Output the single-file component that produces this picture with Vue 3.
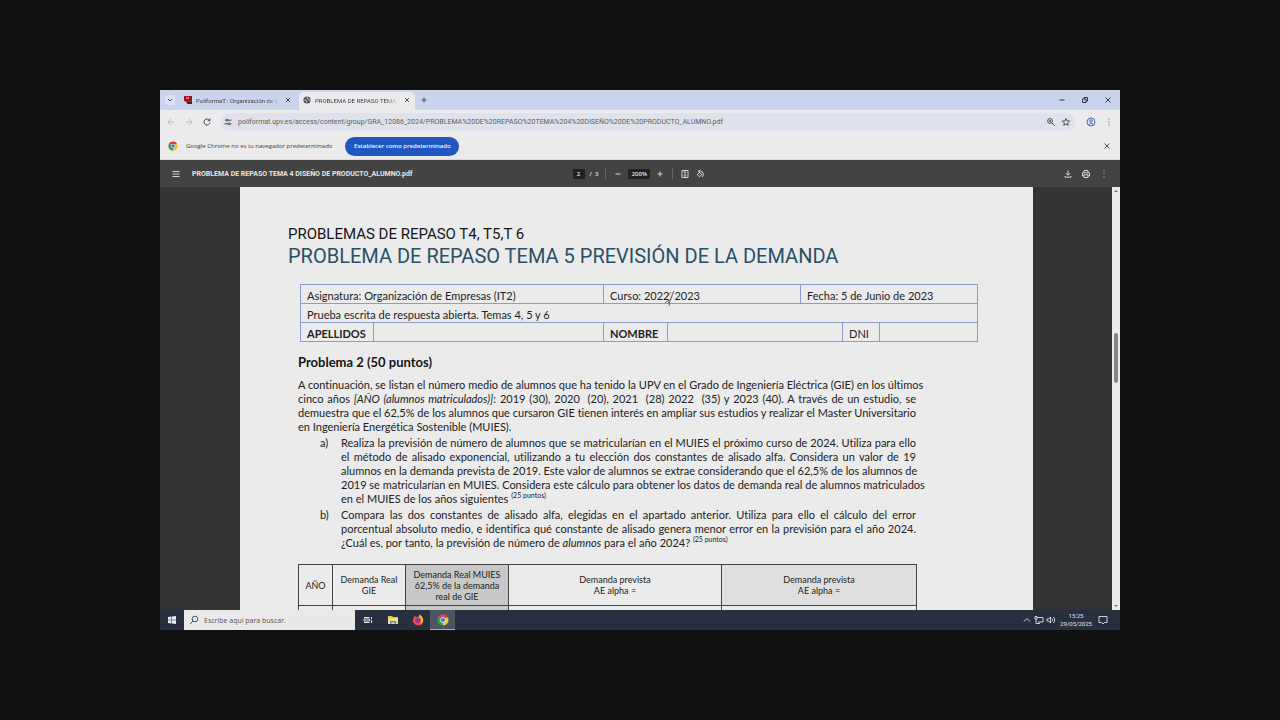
<script setup>
import { ref } from 'vue';

const url = ref('poliformat.upv.es/access/content/group/GRA_12086_2024/PROBLEMA%20DE%20REPASO%20TEMA%204%20DISEÑO%20DE%20PRODUCTO_ALUMNO.pdf');
const pageNumber = ref('2');
const zoomLevel = ref('200%');
const search = ref('');

const intro = [
    'A continuación, se listan el número medio de alumnos que ha tenido la UPV en el Grado de Ingeniería Eléctrica (GIE) en los últimos',
    'cinco años <em>[AÑO (alumnos matriculados)]</em>: 2019 (30), 2020&nbsp; (20), 2021&nbsp; (28) 2022&nbsp; (35) y 2023 (40). A través de un estudio, se',
    'demuestra que el 62,5% de los alumnos que cursaron GIE tienen interés en ampliar sus estudios y realizar el Master Universitario',
    'en Ingeniería Energética Sostenible (MUIES).'
];

const questions = [
    {
        mark: 'a)',
        lines: [
            'Realiza la previsión de número de alumnos que se matricularían en el MUIES el próximo curso de 2024. Utiliza para ello',
            'el método de alisado exponencial, utilizando a tu elección dos constantes de alisado alfa. Considera un valor de 19',
            'alumnos en la demanda prevista de 2019. Este valor de alumnos se extrae considerando que el 62,5% de los alumnos de',
            '2019 se matricularían en MUIES. Considera este cálculo para obtener los datos de demanda real de alumnos matriculados',
            'en el MUIES de los años siguientes <sup>(25 puntos)</sup>'
        ]
    },
    {
        mark: 'b)',
        lines: [
            'Compara las dos constantes de alisado alfa, elegidas en el apartado anterior. Utiliza para ello el cálculo del error',
            'porcentual absoluto medio, e identifica qué constante de alisado genera menor error en la previsión para el año 2024.',
            '¿Cuál es, por tanto, la previsión de número de <em>alumnos</em> para el año 2024? <sup>(25 puntos)</sup>'
        ]
    }
];
</script>

<template>
    <div class="stage">
        <div class="desktop">
            <header class="tabstrip">
                <button class="icon search-tabs" aria-label="Buscar pestañas">
                    <svg viewBox="0 0 10 10"><path d="M3 4l2 2 2-2" /></svg>
                </button>
                <div class="tab">
                    <svg class="favicon" viewBox="0 0 9 9"><path d="M0 0h9v6H0z" fill="#a8121f" /><path d="M2 6h7v3H4z" fill="#43202a" /><path d="M3 1v2h2V1" stroke="#e9a0a5" fill="none" /></svg>
                    <span class="tab-title">PoliformaT : Organización de E</span>
                    <button class="icon" aria-label="Cerrar"><svg viewBox="0 0 10 10"><path d="M3 3l4 4M7 3l-4 4" /></svg></button>
                </div>
                <div class="tab active">
                    <svg class="favicon" viewBox="0 0 9 9"><circle cx="4.5" cy="4.5" r="4" fill="#4a4d52" /><path d="M1.200 4.500h2l1 1.200v1.800M4.500 1.200v1.300l1.500.6 1 1.700h1" stroke="#e9eaec" fill="none" /></svg>
                    <span class="tab-title">PROBLEMA DE REPASO TEMA 4</span>
                    <button class="icon" aria-label="Cerrar"><svg viewBox="0 0 10 10"><path d="M3 3l4 4M7 3l-4 4" /></svg></button>
                </div>
                <button class="icon new-tab" aria-label="Nueva pestaña"><svg viewBox="0 0 10 10"><path d="M5 2.500v5M2.500 5h5" /></svg></button>
                <div class="window-buttons">
                    <button class="icon" aria-label="Minimizar"><svg viewBox="0 0 10 10"><path d="M2.500 5h5" /></svg></button>
                    <button class="icon" aria-label="Restaurar"><svg viewBox="0 0 10 10"><path d="M2.500 4h3.500v3.500H2.500zM4 4V2.500h3.500V6H6" /></svg></button>
                    <button class="icon" aria-label="Cerrar ventana"><svg viewBox="0 0 10 10"><path d="M2.500 2.500l5 5M7.500 2.500l-5 5" /></svg></button>
                </div>
            </header>

            <nav class="toolbar">
                <button class="icon faded" aria-label="Atrás"><svg viewBox="0 0 10 10"><path d="M8 5H2M5 2L2 5l3 3" /></svg></button>
                <button class="icon faded" aria-label="Adelante"><svg viewBox="0 0 10 10"><path d="M2 5h6M5 2l3 3-3 3" /></svg></button>
                <button class="icon" aria-label="Recargar"><svg viewBox="0 0 10 10"><path d="M7.600 3.500A3 3 0 1 0 8 5.500M8 1.500v2.200H5.800" /></svg></button>
                <div class="address">
                    <svg class="glyph" viewBox="0 0 10 10"><path d="M2 3.200h1M5 3.200h3.500M1.500 6.800H5M7.500 6.800h1" /><circle cx="4" cy="3.200" r="1" /><circle cx="6.200" cy="6.800" r="1" /></svg>
                    <input v-model="url" type="text" class="url" aria-label="Dirección">
                    <button class="icon" aria-label="Zoom"><svg viewBox="0 0 10 10"><circle cx="4" cy="4" r="2.400" /><path d="M6 6l2.500 2.500M3 4h2M4 3v2" /></svg></button>
                    <button class="icon" aria-label="Favoritos"><svg viewBox="0 0 10 10"><path d="M5 1.500l1 2.400 2.600.2-2 1.700.6 2.500L5 7 2.800 8.300l.6-2.500-2-1.700L4 3.900z" /></svg></button>
                </div>
                <button class="icon profile" aria-label="Perfil"><svg viewBox="0 0 10 10"><circle cx="5" cy="5" r="4" /><circle cx="5" cy="4" r="1.300" /><path d="M2.500 7.800c1-1.600 4-1.600 5 0" /></svg></button>
                <button class="icon menu" aria-label="Menú"><svg viewBox="0 0 10 10"><path d="M5 1.500v1M5 4.500v1M5 7.500v1" /></svg></button>
            </nav>

            <div class="infobar">
                <svg class="chrome-logo" viewBox="0 0 12 12">
                    <path d="M6 6L1.240 3.250A5.500 5.500 0 0 1 10.760 3.250z" fill="#d93a2f" />
                    <path d="M6 6L10.760 3.250A5.500 5.500 0 0 1 6 11.500z" fill="#f2bd2c" />
                    <path d="M6 6V11.500A5.500 5.500 0 0 1 1.240 3.250z" fill="#2c9a4b" />
                    <circle cx="6" cy="6" r="2.700" fill="#eef0f2" /><circle cx="6" cy="6" r="2" fill="#3b78dc" />
                </svg>
                <span>Google Chrome no es tu navegador predeterminado</span>
                <button class="default-button">Establecer como predeterminado</button>
                <button class="icon close-info" aria-label="Cerrar aviso"><svg viewBox="0 0 10 10"><path d="M2.500 2.500l5 5M7.500 2.500l-5 5" /></svg></button>
            </div>

            <div class="pdfbar">
                <div class="pdf-left">
                    <button class="icon" aria-label="Menú lateral"><svg viewBox="0 0 10 10"><path d="M1.500 2.500h7M1.500 5h7M1.500 7.500h7" /></svg></button>
                    <span class="pdf-name">PROBLEMA DE REPASO TEMA 4 DISEÑO DE PRODUCTO_ALUMNO.pdf</span>
                </div>
                <div class="pdf-center">
                    <input v-model="pageNumber" type="text" class="page-input" aria-label="Página">
                    <span class="pages">/&nbsp; 3</span>
                    <i class="divider"></i>
                    <button class="icon" aria-label="Alejar"><svg viewBox="0 0 10 10"><path d="M2.500 5h5" /></svg></button>
                    <input v-model="zoomLevel" type="text" class="zoom-input" aria-label="Nivel de zoom">
                    <button class="icon" aria-label="Acercar"><svg viewBox="0 0 10 10"><path d="M5 2.500v5M2.500 5h5" /></svg></button>
                    <i class="divider"></i>
                    <button class="icon" aria-label="Ajustar"><svg viewBox="0 0 10 10"><path d="M2 1.500h6v7H2zM5 2.500v5M4 3.500l1-1 1 1M4 6.500l1 1 1-1" /></svg></button>
                    <button class="icon" aria-label="Girar"><svg viewBox="0 0 10 10"><path d="M4.500 3.500L6.800 5.500 4.500 7.800 2.200 5.500zM3.500 2.200h2a3.200 3.200 0 0 1 1.500 5.800M5 .7L3.500 2.200 5 3.600" /></svg></button>
                </div>
                <div class="pdf-right">
                    <button class="icon" aria-label="Descargar"><svg viewBox="0 0 10 10"><path d="M5 1.500v4.500M3 4.200l2 2 2-2M2 7v1.200h6V7" /></svg></button>
                    <button class="icon" aria-label="Imprimir"><svg viewBox="0 0 10 10"><path d="M3 3.500v-2h4v2M3 7H1.500V3.800h7V7H7M3 5.800h4v2.700H3z" /></svg></button>
                    <button class="icon" aria-label="Más"><svg viewBox="0 0 10 10"><path d="M5 1.500v1M5 4.500v1M5 7.500v1" /></svg></button>
                </div>
            </div>

            <main class="viewer">
                <article class="paper">
                    <p class="series">PROBLEMAS DE REPASO T4, T5,T 6</p>
                    <h1>PROBLEMA DE REPASO TEMA 5 PREVISIÓN DE LA DEMANDA</h1>

                    <table class="exam">
                        <colgroup>
                            <col class="w73"><col class="w230"><col class="w64"><col class="w133"><col class="w42"><col class="w37"><col>
                        </colgroup>
                        <tbody>
                            <tr>
                                <td colspan="2">Asignatura: Organización de Empresas (IT2)</td>
                                <td colspan="2" class="course">Curso: 2022/2023
                                    <svg class="pointer" viewBox="0 0 10 16"><path d="M1 8l6-7M4 12l3-4M1 12l4-3M5 15l1-5" /></svg>
                                </td>
                                <td colspan="3">Fecha: 5 de Junio de 2023</td>
                            </tr>
                            <tr>
                                <td colspan="7">Prueba escrita de respuesta abierta. Temas 4, 5 y 6</td>
                            </tr>
                            <tr>
                                <th>APELLIDOS</th>
                                <td></td>
                                <th>NOMBRE</th>
                                <td colspan="2"></td>
                                <td>DNI</td>
                                <td></td>
                            </tr>
                        </tbody>
                    </table>

                    <section class="problem">
                        <h2>Problema 2 (50 puntos)</h2>
                        <p class="text">
                            <span v-for="line in intro" :key="line" class="line" v-html="line"></span>
                        </p>
                        <div v-for="question in questions" :key="question.mark" class="question">
                            <span class="mark">{{ question.mark }}</span>
                            <p class="text">
                                <span v-for="line in question.lines" :key="line" class="line" v-html="line"></span>
                            </p>
                        </div>

                        <table class="demand">
                            <colgroup>
                                <col class="w34"><col class="w73"><col class="w103"><col class="w213"><col>
                            </colgroup>
                            <thead>
                                <tr>
                                    <th>AÑO</th>
                                    <th>Demanda Real<br>GIE</th>
                                    <th class="dark">Demanda Real MUIES<br>62,5% de la demanda<br>real de GIE</th>
                                    <th>Demanda prevista<br>AE alpha =</th>
                                    <th class="grey">Demanda prevista<br>AE alpha =</th>
                                </tr>
                            </thead>
                            <tbody>
                                <tr>
                                    <td></td>
                                    <td></td>
                                    <td class="dark"></td>
                                    <td></td>
                                    <td></td>
                                </tr>
                            </tbody>
                        </table>
                    </section>
                </article>
                <div class="scrollbar">
                    <svg viewBox="0 0 8 8"><path d="M2 5l2-2 2 2z" /></svg>
                    <div class="track">
                        <div class="thumb"></div>
                    </div>
                    <svg viewBox="0 0 8 8"><path d="M2 3l2 2 2-2z" /></svg>
                </div>
            </main>

            <footer class="taskbar">
                <button class="task start" aria-label="Inicio">
                    <svg viewBox="0 0 10 10"><path d="M1 2l3.500-.5v3.200H1zM5 1.400L9 1v3.700H5zM1 5.200h3.500v3.200L1 8zM5 5.200h4V9l-4-.5z" fill="#dfeaf3" /></svg>
                </button>
                <label class="search">
                    <svg class="glyph" viewBox="0 0 10 10"><circle cx="6" cy="4" r="2.800" /><path d="M4 6L1 9" /></svg>
                    <input v-model="search" type="text" placeholder="Escribe aquí para buscar." aria-label="Buscar">
                </label>
                <button class="task" aria-label="Vista de tareas">
                    <svg viewBox="0 0 10 10"><path d="M1 2.500h5.500M1 7.500h5.500M1 4h5.500v2H1zM8.500 2v2M8.500 5v3" stroke="#dfe3ea" fill="none" /></svg>
                </button>
                <button class="task" aria-label="Explorador">
                    <svg class="big" viewBox="0 0 12 12"><path d="M1 2h4l1 1h5v7H1z" fill="#e9bd4c" /><path d="M1 4h10v6H1z" fill="#f4dc86" /><path d="M3 7h6v3H7.500V8.500h-3V10H3z" fill="#4a94c8" /></svg>
                </button>
                <button class="task" aria-label="Firefox">
                    <svg class="big" viewBox="0 0 12 12"><path d="M6 11.500A5 5 0 0 1 1.500 4L3 1.500 4 3l3-.5L7.500.500C10 2 11.500 4 11.200 7A5.200 5.200 0 0 1 6 11.500z" fill="#ee4a3d" /><path d="M7.500.500C10 2 11.500 4 11.200 7c-.5 2-2 3-3 3.200C9.500 7 9 5 7 2.500z" fill="#f8b52e" /><circle cx="6" cy="6.500" r="2.300" fill="#7b3bb4" /></svg>
                </button>
                <button class="task current" aria-label="Chrome">
                    <svg class="big" viewBox="0 0 12 12">
                        <path d="M6 6L1.240 3.250A5.500 5.500 0 0 1 10.760 3.250z" fill="#e04a3c" />
                        <path d="M6 6L10.760 3.250A5.500 5.500 0 0 1 6 11.500z" fill="#f4c534" />
                        <path d="M6 6V11.500A5.500 5.500 0 0 1 1.240 3.250z" fill="#35a554" />
                        <circle cx="6" cy="6" r="2.700" fill="#eef0f2" /><circle cx="6" cy="6" r="2" fill="#3b78dc" />
                    </svg>
                </button>
                <div class="tray">
                    <svg class="glyph" viewBox="0 0 10 10"><path d="M2 6.500l3-3 3 3" /></svg>
                    <svg class="glyph" viewBox="0 0 10 10"><path d="M3 2.500h6v4.500H4M1 1.500h2v2.500H1zM2 4v4.500h4" /></svg>
                    <svg class="glyph" viewBox="0 0 10 10"><path d="M1 4h1.500L4.500 2v6L2.500 6H1zM6 3.500c.8 1 .8 2 0 3M7.500 2c1.500 2 1.500 4 0 6" /></svg>
                    <div class="clock">
                        <span>15:25</span>
                        <span>29/05/2025</span>
                    </div>
                    <svg class="glyph" viewBox="0 0 10 10"><path d="M1 1.500h8v6H6.500L5 9 3.500 7.500H1z" /></svg>
                </div>
            </footer>
        </div>
    </div>
</template>

<style>
body {
    margin: 0;
    background: #111111;
}
</style>

<style scoped>
* {
    box-sizing: border-box;
}

.stage {
    display: flex;
    height: 100vh;
    padding: 12.5vh 12.5vw;
    font-family: "Open Sans", "Noto Sans", sans-serif;
}

.desktop {
    display: flex;
    flex-direction: column;
    flex: 1;
    min-width: 0;
    overflow: hidden;
    background: #ebebeb;
    color: #3c3f44;
    font-size: 6px;
}

button,
input {
    margin: 0;
    padding: 0;
    border: none;
    background: none;
    color: inherit;
    font-family: inherit;
    font-size: inherit;
}

svg {
    display: block;
    flex: none;
}

.icon,
.icon svg,
.glyph {
    flex: none;
    width: 10px;
    height: 10px;
}

.icon svg,
.glyph {
    fill: none;
    stroke: currentColor;
    stroke-width: 0.9;
}

/* tabs */
.tabstrip {
    display: flex;
    align-items: center;
    flex: none;
    height: 20px;
    padding: 0 7px 0 5px;
    background: #c9d4ec;
}

.search-tabs {
    margin-right: 5px;
    border-radius: 3px;
    background: #dbe3f3;
}

.tab {
    display: flex;
    align-items: center;
    gap: 4px;
    width: 116px;
    height: 18px;
    margin-top: 2px;
    padding: 0 3px 2px 4px;
}

.tab.active {
    margin-left: 3px;
    border-radius: 5px 5px 0 0;
    background: #ebebed;
}

.favicon {
    width: 8px;
    height: 8px;
}

.tab-title {
    flex: 1;
    min-width: 0;
    font-family: Roboto, sans-serif;
    white-space: nowrap;
    mask-image: linear-gradient(90deg, #000 85%, transparent);
}

.new-tab {
    margin-left: 4px;
}

.window-buttons {
    display: flex;
    gap: 13px;
    margin-left: auto;
    color: #22252b;
}

/* address row */
.toolbar {
    display: flex;
    align-items: center;
    gap: 8px;
    flex: none;
    height: 23px;
    padding: 0 6px;
    background: #ebebed;
}

.faded {
    color: #b0b3b8;
}

.address {
    display: flex;
    align-items: center;
    gap: 5px;
    flex: 1;
    height: 18px;
    padding: 0 5px 0 3px;
    border-radius: 9px;
    background: #dfe2ea;
}

.url {
    flex: 1;
    min-width: 0;
    color: #5a5e66;
    font-family: Roboto, sans-serif;
    font-size: 7px;
}

.profile {
    margin-left: 2px;
    color: #3560b8;
}

.infobar {
    display: flex;
    align-items: center;
    gap: 8px;
    flex: none;
    height: 27px;
    padding: 0 8px;
    border-bottom: 1px solid #d8d8d8;
}

.chrome-logo {
    width: 10px;
    height: 10px;
}

.default-button {
    width: 114px;
    height: 19px;
    margin-left: 5px;
    border-radius: 10px;
    background: #1f57c3;
    color: #f0f4fc;
    font-weight: 600;
}

.close-info {
    margin-left: auto;
}

/* pdf viewer */
.pdfbar {
    display: grid;
    grid-template-columns: 1fr auto 1fr;
    align-items: center;
    flex: none;
    height: 27px;
    padding: 0 11px;
    background: #434343;
    color: #e6e6e6;
    font-weight: 600;
}

.pdf-left,
.pdf-center,
.pdf-right {
    display: flex;
    align-items: center;
}

.pdf-left {
    gap: 11px;
}

.pdf-name {
    font-family: Roboto, sans-serif;
    font-size: 7px;
    font-weight: 700;
    white-space: nowrap;
}

.pdf-center {
    gap: 5px;
    padding-right: 2px;
}

.pdf-right {
    gap: 8px;
    justify-content: flex-end;
}

.page-input,
.zoom-input {
    width: 12px;
    height: 10px;
    background: #222222;
    font-weight: 600;
    text-align: center;
}

.zoom-input {
    width: 22px;
}

.divider {
    width: 1px;
    height: 11px;
    margin: 0 2px;
    background: #666666;
}

.viewer {
    display: flex;
    flex: 1;
    min-height: 0;
    overflow: hidden;
    background: #333333;
}

.paper {
    flex: 1;
    min-width: 0;
    height: max-content;
    margin: 0 79px 0 80px;
    padding: 37px 48px 0;
    background: #ebebeb;
    color: #222222;
    font-family: Lato, Roboto, sans-serif;
    font-size: 11px;
    font-variant-ligatures: none;
}

.series,
h1 {
    margin: 0;
    font-family: Roboto, sans-serif;
    font-weight: 400;
    white-space: nowrap;
}

.series {
    color: #161616;
    font-size: 15px;
    line-height: 20px;
}

h1 {
    color: #2a5068;
    font-size: 20px;
    line-height: 24px;
}

table {
    border-collapse: collapse;
    table-layout: fixed;
}

.exam {
    width: 678px;
    margin: 16px 0 0 12px;
    text-align: left;
}

.exam td,
.exam th {
    height: 19px;
    padding: 0 6px;
    border: 1px solid #8c9cc8;
    line-height: 14px;
    vertical-align: bottom;
    white-space: nowrap;
}

.course {
    position: relative;
}

.pointer {
    position: absolute;
    top: 6px;
    left: 60px;
    width: 10px;
    height: 16px;
    fill: none;
    stroke: #444444;
    stroke-width: 0.8;
}

.w34 { width: 34px; }
.w37 { width: 37px; }
.w42 { width: 42px; }
.w64 { width: 64px; }
.w73 { width: 73px; }
.w103 { width: 103px; }
.w133 { width: 133px; }
.w213 { width: 213px; }
.w230 { width: 230px; }

.problem {
    width: 618px;
    margin-left: 10px;
}

h2 {
    margin: 11px 0 7px;
    color: #161616;
    font-size: 13px;
    line-height: 18px;
}

.text {
    flex: 1;
    min-width: 0;
    margin: 0;
    line-height: 14px;
}

.line {
    display: block;
    text-align-last: justify;
    white-space: nowrap;
}

.line:last-child {
    text-align-last: left;
}

.line :deep(sup) {
    font-size: 7px;
    line-height: 0;
}

.question {
    display: flex;
    margin-top: 2px;
    padding-left: 22px;
}

.mark {
    flex: none;
    width: 21px;
    line-height: 14px;
}

.demand {
    width: 619px;
    margin-top: 14px;
    text-align: center;
}

.demand th,
.demand td {
    height: 41px;
    padding: 0;
    border: 1px solid #444444;
    font-size: 9px;
    font-weight: 400;
    line-height: 11px;
}

.demand .dark {
    background: #c8c8c8;
}

.demand .grey {
    background: #dfdfdf;
}

.scrollbar {
    display: flex;
    flex-direction: column;
    flex: none;
    width: 8px;
    background: #ebebeb;
    fill: #777777;
}

.scrollbar svg {
    width: 8px;
    height: 8px;
}

.track {
    flex: 1;
    padding: 138px 2px 0;
}

.thumb {
    height: 50px;
    border-radius: 2px;
    background: #858585;
}

/* windows taskbar */
.taskbar {
    display: flex;
    flex: none;
    height: 20px;
    background: #283040;
}

.task {
    display: flex;
    align-items: center;
    justify-content: center;
    width: 25px;
}

.task.start {
    width: 24px;
}

.task svg {
    width: 10px;
    height: 10px;
}

.task .big {
    width: 12px;
    height: 12px;
}

.task.current {
    border-bottom: 1px solid #8ab4dc;
    background: #4b5563;
}

.search {
    display: flex;
    align-items: center;
    gap: 5px;
    width: 171px;
    padding-left: 5px;
    background: #e9e9e9;
}

.search input {
    flex: 1;
    min-width: 0;
    font-size: 7px;
}

.search input::placeholder {
    color: #555555;
    opacity: 1;
}

.tray {
    display: flex;
    align-items: center;
    gap: 2px;
    margin-left: auto;
    padding-right: 12px;
    color: #dfe3ea;
}

.clock {
    display: flex;
    flex-direction: column;
    align-items: center;
    margin: 0 4px 0 2px;
    font-family: Roboto, sans-serif;
    line-height: 8px;
}
</style>
